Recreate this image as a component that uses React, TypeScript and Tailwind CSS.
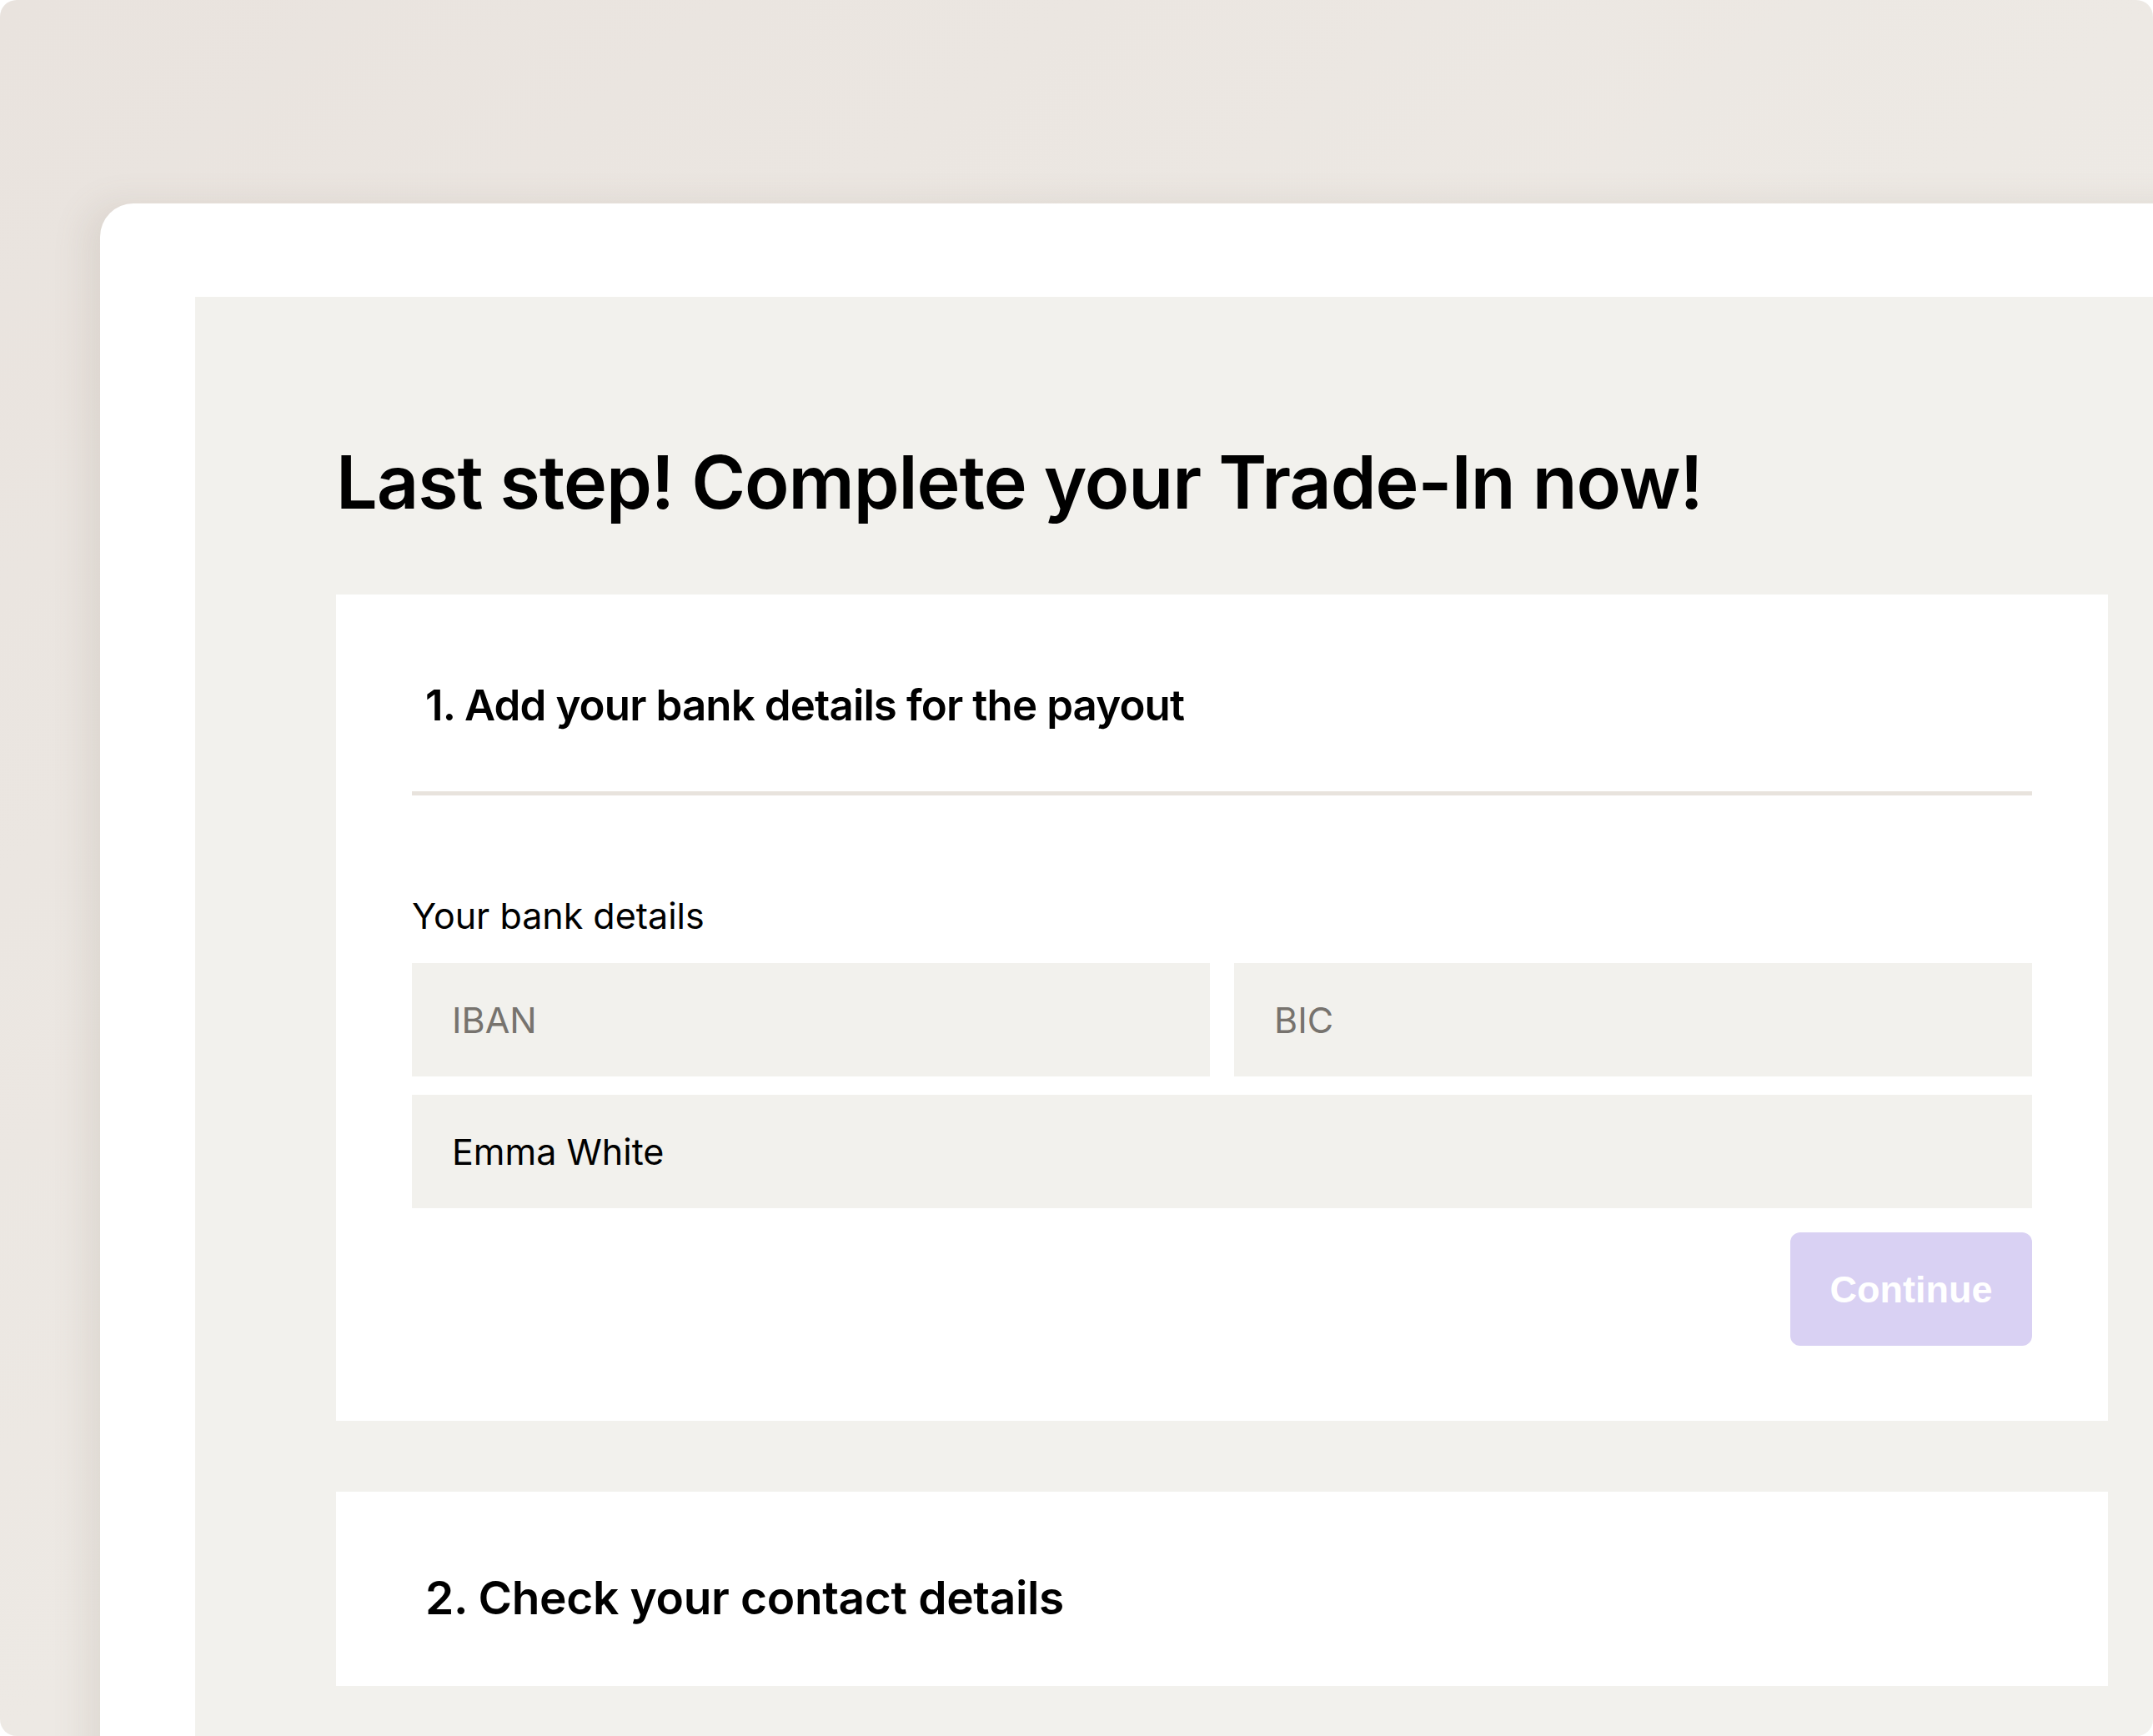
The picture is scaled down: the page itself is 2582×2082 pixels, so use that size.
export default function App() {
  return (
    <div className="w-[2582px] h-[2082px] bg-white">
      <div
        className="h-full w-full overflow-hidden rounded-[20px] bg-gradient-to-br from-[#e9e3de] via-[#ede9e4] to-[#efece8] pl-[120px] pt-[244px]"
        style={{ fontFamily: "Inter, 'Noto Sans', sans-serif" }}
      >
        {/* Browser frame */}
        <div className="h-[1900px] w-[2600px] rounded-tl-[40px] bg-white pl-[114px] pt-[112px] shadow-[-18px_0_40px_rgba(120,105,90,0.12)]">
          <div className="h-full w-full bg-[#f2f1ed] pl-[169px] pt-[178px]">
            <h1 className="text-[88px] font-semibold leading-none tracking-[-0.012em] text-black">
              Last step! Complete your Trade-In now!
            </h1>

            {/* Step 1 */}
            <div className="mt-[91px] flex w-[2125px] flex-col bg-white px-[91px] pb-[90px] pt-[107px]">
              <h2 className="pl-[16px] text-[51px] font-semibold leading-none tracking-[-0.017em] text-black">
                1. Add your bank details for the payout
              </h2>
              <div className="mt-[78px] h-[5px] w-full bg-[#e8e3dd]" />
              <p className="mt-[123px] text-[43px] leading-none text-black">Your bank details</p>
              <div className="mt-[35px] grid grid-cols-2 gap-[29px]">
                <div className="flex h-[136px] items-center bg-[#f2f1ed] pl-[48px] text-[43px] leading-none text-[#77736e]">
                  IBAN
                </div>
                <div className="flex h-[136px] items-center bg-[#f2f1ed] pl-[48px] text-[43px] leading-none text-[#77736e]">
                  BIC
                </div>
              </div>
              <div className="mt-[22px] flex h-[136px] items-center bg-[#f2f1ed] pl-[48px] text-[43px] leading-none text-black">
                Emma White
              </div>
              <button
                className="mt-[29px] flex h-[136px] w-[290px] items-center justify-center self-end rounded-[12px] bg-[#d9d1f3] text-[45px] font-bold leading-none text-white"
                style={{ fontFamily: "'Liberation Sans', Arial, sans-serif" }}
              >
                Continue
              </button>
            </div>

            {/* Step 2 */}
            <div className="mt-[85px] h-[233px] w-[2125px] bg-white px-[91px] pt-[100px]">
              <h2 className="pl-[16px] text-[55px] font-semibold leading-none tracking-[-0.006em] text-black">
                2. Check your contact details
              </h2>
            </div>
          </div>
        </div>
      </div>
    </div>
  )
}
